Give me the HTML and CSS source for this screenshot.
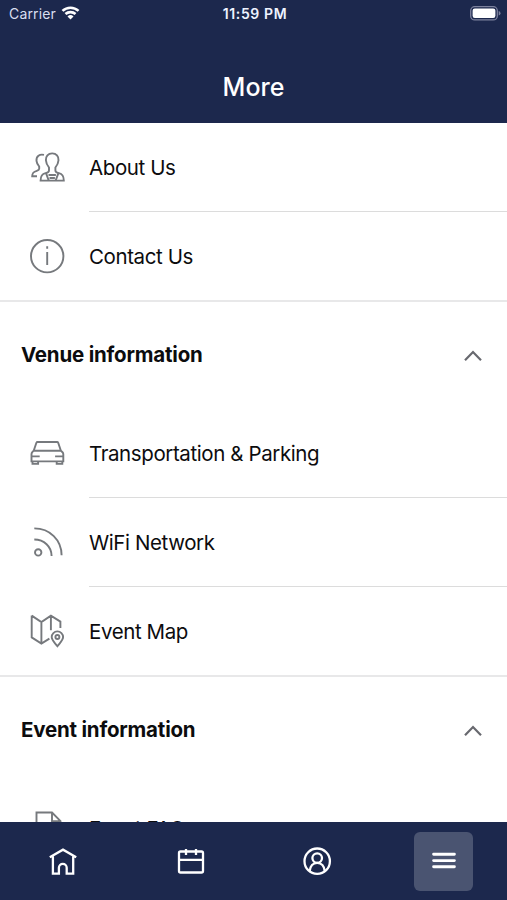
FILE: index.html
```html
<!DOCTYPE html>
<html lang="en">
<head>
<meta charset="utf-8">
<meta name="viewport" content="width=device-width, initial-scale=1">
<title>More</title>
<link rel="stylesheet" href="styles.css">
</head>
<body>
<div class="screen">
  <header class="top">
    <div class="status">
      <div class="carrier"><span>Carrier</span>
        <svg class="wifi" viewBox="0 0 20 15"><g fill="none" stroke="#fff" stroke-width="2.8"><path d="M1.4 5.2a12.6 12.6 0 0 1 17.2 0"/><path d="M4.6 8.6a8 8 0 0 1 10.8 0"/></g><path d="M10 14.4 6.8 11.2a4.6 4.6 0 0 1 6.400 0z" fill="#fff"/></svg>
      </div>
      <div class="time">11:59 PM</div>
      <div class="power">
        <svg class="battery" viewBox="0 0 31 15"><rect x=".7" y=".7" width="26.6" height="13.2" rx="4" fill="none" stroke="#7c819d" stroke-width="1.3"/><rect x="2.6" y="2.6" width="22.8" height="9.4" rx="2.2" fill="#fff"/><path d="M28.7 5v4.6q1.8-.6 1.8-2.3T28.7 5z" fill="#7c819d"/></svg>
      </div>
    </div>
    <h1 class="title">More</h1>
  </header>

  <main class="content">
    <ul class="list">
      <li class="row">
        <svg class="icon" viewBox="0 0 40 40"><path d="M25.2 6.400c-4.200 0-6.500 2.900-6.300 6.800.2 3.300 1.400 5.100 3.100 7.300v3c0 1.800-1.300 2.100-3.500 2.700-3.400.9-4.900 2.300-4.900 7.400h23.200c0-5.100-1.500-6.500-4.900-7.400-2.200-.6-3.500-.9-3.500-2.700v-3c1.700-2.200 2.900-4 3.100-7.300.2-3.900-2.100-6.800-6.300-6.800z"/><path d="M17 7.900c-4.400-1-7.900 1.200-7.500 5.900.2 2.200 1.300 4 2.700 5.700v2.300c0 1.300-1 1.600-2.400 2-3.400 1-4.600 2-4.600 5.400h4.800M21.500 28h7.400M19 26.200l2.700 7.200M31.400 26.200l-2.700 7.200M22.500 31h5.400"/></svg>
        <span class="label">About Us</span>
      </li>
      <li class="row">
        <svg class="icon" viewBox="0 0 40 40"><circle cx="20.200" cy="20.200" r="16.200"/><path d="M20.200 16v13M20.200 10.200v2.600"/></svg>
        <span class="label">Contact Us</span>
      </li>
    </ul>

    <section class="group">
      <h2 class="heading"><span>Venue information</span>
        <svg class="chevron" viewBox="0 0 20 12"><path d="m2 10.200 8-8.200 8 8.200"/></svg>
      </h2>
      <ul class="list">
        <li class="row">
          <svg class="icon" viewBox="0 0 40 40"><path d="M10.500 9h19.600q.8 0 1.100.8l2.700 7.900H6.700l2.700-7.900q.3-.8 1.100-.8zM6.700 17.700l-1.400 1.500q-.8.900-.8 2v7.200h31.800v-7.200q0-1.100-.8-2l-1.600-1.500M4.500 23.400h8.200M28.100 23.400h8.200M5.500 28.400v2.500h5.600v-2.500M29.700 28.400v2.500h5.600v-2.500"/></svg>
          <span class="label">Transportation &amp; Parking</span>
        </li>
        <li class="row">
          <svg class="icon" viewBox="0 0 40 40"><circle cx="11.200" cy="30.400" r="3.200"/><path d="M7.300 17.500c9.700 0 17.300 7 17.300 16.500M7.300 6.400c15.500 0 27.300 11.500 27.300 26.900"/></svg>
          <span class="label">WiFi Network</span>
        </li>
        <li class="row">
          <svg class="icon" viewBox="0 0 40 40"><path d="m4.700 4.600 9.700 6.500 9.500-6.500 9.500 6v6.500M4.700 4.600v21.800l9.700 6.200 8-5M14.400 11.100v21.500M23.900 4.600v14.600M30.400 35.200c-2.800-3.700-5.700-6-5.700-9.100a5.700 5.700 0 0 1 11.400 0c0 3.100-2.900 5.400-5.700 9.100z"/><circle cx="30.400" cy="26" r="2"/></svg>
          <span class="label">Event Map</span>
        </li>
      </ul>
    </section>

    <section class="group">
      <h2 class="heading"><span>Event information</span>
        <svg class="chevron" viewBox="0 0 20 12"><path d="m2 10.200 8-8.200 8 8.200"/></svg>
      </h2>
      <ul class="list">
        <li class="row">
          <svg class="icon" viewBox="0 0 40 40"><path d="M25 4.500H9.500v31h24V13.200zM25 4.500v8.700h8.500"/></svg>
          <span class="label">Event FAQ</span>
        </li>
      </ul>
    </section>
  </main>

  <nav class="tabs">
    <a class="tab"><svg viewBox="0 0 32 32"><path d="M2.800 12.300 16 4.700l13.200 7.600M5.900 11.500v17.200h6v-6a3.900 3.900 0 0 1 7.800 0v6h6.500V11.500"/></svg></a>
    <a class="tab"><svg viewBox="0 0 32 32"><rect x="5" y="6.500" width="24" height="21" rx="1.500"/><path d="M5 14.800h24M12 4v6M22 4v6"/></svg></a>
    <a class="tab"><svg viewBox="0 0 32 32"><circle cx="16.200" cy="16.200" r="12.700"/><circle cx="16.200" cy="13.100" r="4.800"/><path d="M8.700 26c.5-4.800 3.300-8.200 7.500-8.200s7 3.400 7.500 8.200"/></svg></a>
    <a class="tab active"><svg viewBox="0 0 32 32"><path class="bars" d="M5.600 9.300h20.800M5.600 15.600h20.800M5.600 21.800h20.800"/></svg></a>
  </nav>
</div>
</body>
</html>
```

FILE: styles.css
```css
* { box-sizing: border-box; }
body {
  margin: 0;
  background: #fff;
  color: #0c0c0e;
  font-family: Inter, "Liberation Sans", sans-serif;
}
.screen {
  display: flex;
  flex-direction: column;
  height: 900px;
  overflow: hidden;
}
.top {
  flex: none;
  height: 123px;
  background: #1c284d;
  color: #fff;
}
.status {
  display: grid;
  grid-template-columns: 1fr auto 1fr;
  align-items: center;
  height: 27px;
  padding: 0 6px 0 9px;
  font-size: 14px;
}
.carrier {
  display: flex;
  align-items: center;
  gap: 6px;
  color: #d9dff0;
}
.carrier span { letter-spacing: .15px; }
.wifi { width: 19px; height: 14px; margin: -2px 0 0 -1px; }
.time { font-size: 14px; font-weight: 600; letter-spacing: .6px; color: #eef3ff; }
.power { display: flex; justify-content: flex-end; }
.battery { width: 31px; height: 15px; }
.title {
  margin: 0;
  padding-top: 44px;
  font-size: 25px;
  font-weight: 500;
  line-height: 32px;
  text-align: center;
}
.content { flex: 1; min-height: 0; overflow: hidden; }
.list { margin: 0; padding: 0; list-style: none; border-bottom: 2px solid #e8e8e9; }
.row {
  display: flex;
  align-items: stretch;
  height: 89px;
  padding-left: 27px;
}
.row:last-child { height: 88px; }
.icon {
  flex: none;
  width: 40px;
  height: 40px;
  margin: 24px 22px 0 0;
  fill: none;
  stroke: #76797d;
  stroke-width: 1.900;
}
.label {
  flex: 1;
  border-bottom: 1px solid #dcdcdc;
  font-size: 20.500px;
  letter-spacing: -.4px;
  line-height: 89px;
  white-space: nowrap;
}
.row:last-child .label { border-bottom: 0; }
.heading {
  display: flex;
  align-items: center;
  justify-content: space-between;
  height: 107px;
  margin: 0;
  padding: 0 24px 0 21px;
  font-size: 20.500px;
  font-weight: 700;
  letter-spacing: -.2px;
}
.heading span { margin-top: -2px; }
.chevron {
  width: 20px;
  height: 12px;
  fill: none;
  stroke: #68696f;
  stroke-width: 2.200;
}
.tabs {
  flex: none;
  display: grid;
  grid-template-columns: repeat(4, 1fr);
  align-items: center;
  justify-items: center;
  height: 78px;
  background: #1c284d;
}
.tab {
  display: flex;
  align-items: center;
  justify-content: center;
  width: 59px;
  height: 59px;
  border-radius: 6px;
}
.tab svg {
  width: 32px;
  height: 32px;
  fill: none;
  stroke: #fff;
  stroke-width: 2.300;
}
.tab .bars { stroke-width: 2.900; stroke-linecap: round; }
.active { background: #4a5471; }
```
